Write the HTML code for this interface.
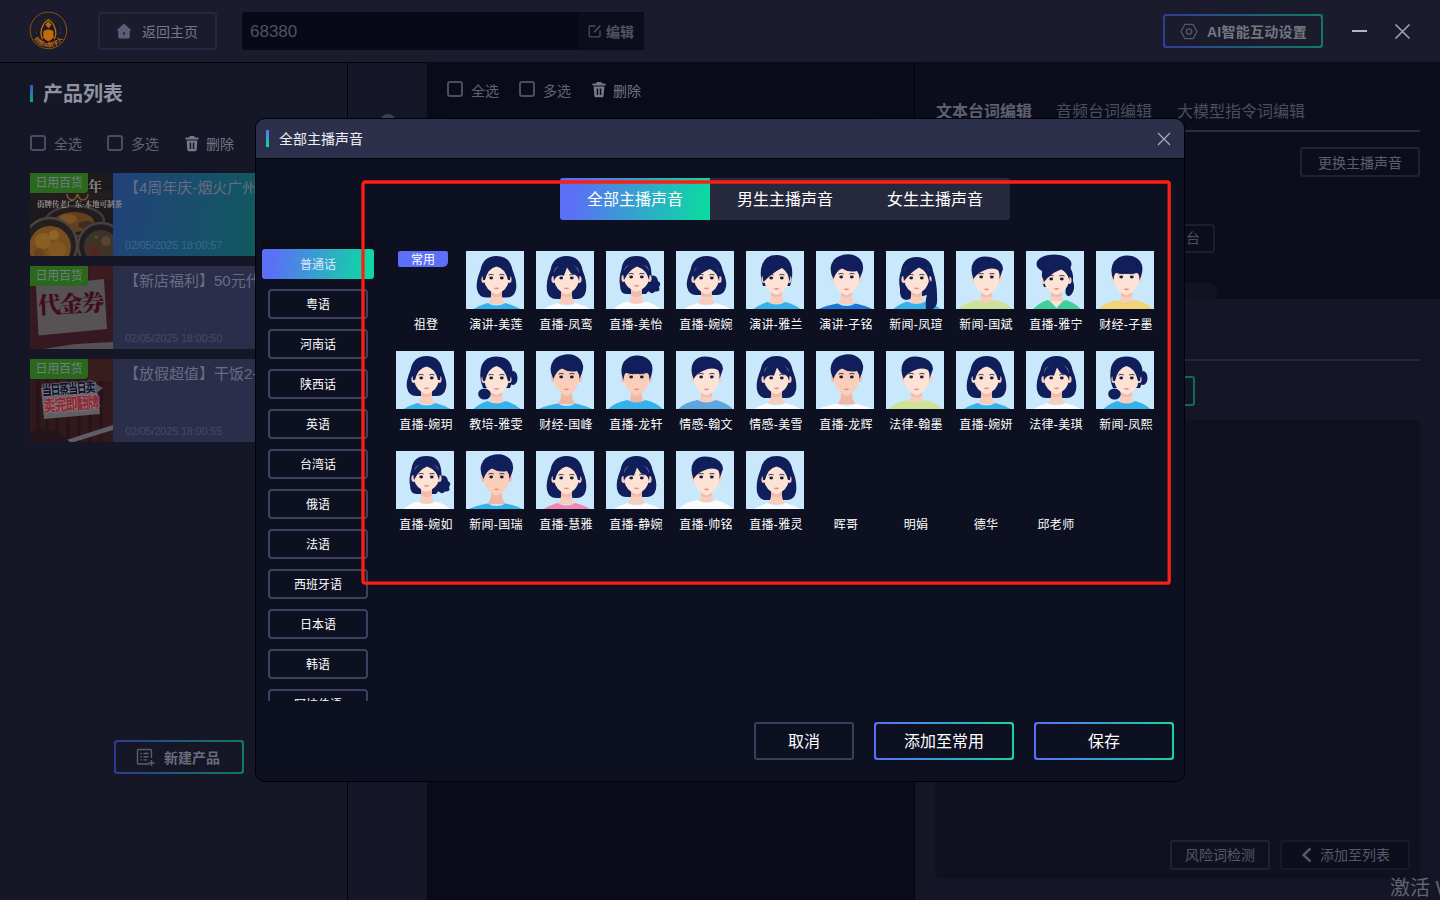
<!DOCTYPE html>
<html lang="zh-CN">
<head>
<meta charset="utf-8">
<title>全部主播声音</title>
<style>
*{box-sizing:border-box;margin:0;padding:0}
html,body{width:1440px;height:900px;overflow:hidden;background:#151626;font-family:"Liberation Sans","Noto Sans CJK SC",sans-serif;color:#fff}
.abs{position:absolute}
#app{position:relative;width:1440px;height:900px;overflow:hidden;background:#151626}
/* ---------- background app (dimmed) ---------- */
#topbar{left:0;top:0;width:1440px;height:62px;background:#1a1c2e}
#topline{left:0;top:62px;width:427px;height:1px;background:#030306}
#left{left:0;top:63px;width:347px;height:837px;background:#151626}
#leftline{left:347px;top:63px;width:1px;height:837px;background:#030306}
#mid{left:348px;top:63px;width:79px;height:837px;background:#151627}
#center{left:427px;top:62px;width:487px;height:838px;background:#0a0b18}
#rightline{left:914px;top:62px;width:1px;height:838px;background:#030306}
#right{left:915px;top:62px;width:525px;height:838px;background:#141526}
#righttop{left:915px;top:62px;width:525px;height:237px;background:#0c0d1b}
.dim{color:#6c6f82}
.btn-d{border:2px solid #2a2c44;border-radius:3px;color:#70738a;font-size:14px;text-align:center}
.cb{width:16px;height:16px;border:2px solid #4a4c62;border-radius:3px}
.txt14{font-size:14px;line-height:20px;color:#5f6275;white-space:nowrap}
/* product cards */
.card{left:30px;width:230px;height:83px;background:#2b2e4a;overflow:hidden}
.card .thumb{position:absolute;left:0;top:0;width:83px;height:83px}
.card .badge{position:absolute;left:0;top:0;width:58px;height:20px;background:#2a681b;color:#737d86;font-size:12px;line-height:20px;letter-spacing:-0.3px;text-align:center;border-bottom-right-radius:4px;white-space:nowrap;overflow:hidden}
.card .title{position:absolute;left:94px;top:5px;font-size:15px;line-height:20px;color:#686c82;white-space:nowrap}
.card .time{position:absolute;left:95px;top:65px;font-size:11px;line-height:14px;color:#454a66;white-space:nowrap;letter-spacing:-0.2px}
/* ---------- modal ---------- */
#modal{left:255px;top:118px;width:930px;height:664px;border:1px solid #010103;border-radius:10px;background:#0d1021;overflow:hidden}
#mhead{left:0;top:0;width:928px;height:39px;background:#2c304b}
#mheadline{left:0;top:39px;width:928px;height:1px;background:#05050a}
.grad{background:linear-gradient(100deg,#5b6ff7 0%,#5b6ff7 10%,#0dd8a3 94%,#0dd8a3 100%)}
.lang{left:12px;width:100px;height:30px;border:2px solid #3d4060;border-radius:4px;font-size:12px;line-height:28px;text-align:center;color:#fff;white-space:nowrap}
.tab{top:0;width:150px;height:42px;font-size:16px;line-height:44px;text-align:center;color:#fff;white-space:nowrap}
.av{width:58px;height:58px;background:#c9e8fb;overflow:hidden}
.av svg{display:block}
.nm{width:70px;height:16px;font-size:12px;line-height:16px;text-align:center;color:#fff;white-space:nowrap;letter-spacing:0.3px}
.fbtn{top:603px;height:38px;border-radius:3px;font-size:16px;line-height:36px;text-align:center;color:#fff;white-space:nowrap}
</style>
</head>
<body>
<div id="app">
<!--BG-START-->
<div class="abs" id="topbar"></div>
<div class="abs" id="left"></div>
<div class="abs" id="mid"></div>
<div class="abs" id="center"></div>
<div class="abs" id="right"></div>
<div class="abs" id="righttop"></div>
<div class="abs" id="topline"></div>
<div class="abs" id="leftline"></div>
<div class="abs" id="rightline"></div>

<!-- logo -->
<svg class="abs" style="left:28px;top:10px" width="41" height="41" viewBox="0 0 41 41">
  <circle cx="20.400" cy="20.400" r="18.300" fill="none" stroke="#98540e" stroke-width="0.900"/>
  <path d="M11 13.500 A12 12 0 0 1 29.800 13.500" fill="none" stroke="#4d3318" stroke-width="0.800" stroke-dasharray="2 1.300"/>
  <path d="M8.500 24 A12.500 12.500 0 0 1 9.500 15.500 M31.300 15.500 A12.500 12.500 0 0 1 32.300 24" fill="none" stroke="#4d3318" stroke-width="0.800" stroke-dasharray="2 1.300"/>
  <path d="M14.600 29 Q12.800 26.500 13 23 Q13.400 14 20.400 9.800 Q27.400 14 27.800 23 Q28 26.500 26.200 29" fill="none" stroke="#c56a06" stroke-width="1.300"/>
  <path d="M20.400 11.800 L23 14.800 L20.400 17.800 L17.800 14.800 Z" fill="#c56a06" stroke="#c56a06" stroke-width="0.800" stroke-linejoin="round"/>
  <path d="M15.300 21.300 Q20.400 17.800 25.500 21.300 L25.500 27.500 Q23.500 30.300 20.400 31.300 Q17.300 30.300 15.300 27.500Z" fill="#c56a06"/>
  <path id="logoarc" d="M3.800 20.400 A16.600 16.600 0 0 0 37 20.400" fill="none"/>
  <text font-size="5.800" font-weight="700" fill="#c56a06" text-anchor="middle" font-family="Liberation Sans, Noto Sans CJK SC, sans-serif" letter-spacing="0"><textPath href="#logoarc" startOffset="50%">创想AI数字人</textPath></text>
</svg>

<!-- back home -->
<div class="abs" style="left:98px;top:12px;width:119px;height:38px;border:2px solid #25273c;border-radius:3px"></div>
<svg class="abs" style="left:116px;top:23px" width="16" height="16" viewBox="0 0 16 16"><path d="M8 0.500 L0.300 7.600 L2.300 7.600 L2.300 14.200 Q2.300 15.500 3.600 15.500 L12.400 15.500 Q13.700 15.500 13.700 14.200 L13.700 7.600 L15.700 7.600 Z" fill="#5b5e78"/><rect x="7.300" y="9" width="1.400" height="3" fill="#1a1c2d"/></svg>
<div class="abs" style="left:142px;top:22px;font-size:14px;line-height:20px;color:#74778a;white-space:nowrap">返回主页</div>

<!-- name input -->
<div class="abs" style="left:242px;top:12px;width:402px;height:38px;background:#080916;border-radius:3px"></div>
<div class="abs" style="left:579px;top:12px;width:65px;height:38px;background:#0c0d1b;border-radius:0 3px 3px 0"></div>
<div class="abs" style="left:250px;top:21px;font-size:17px;line-height:22px;color:#4f5162;white-space:nowrap">68380</div>
<svg class="abs" style="left:588px;top:24px" width="14" height="14" viewBox="0 0 14 14"><path d="M7.500 2 H2.200 Q1.200 2 1.200 3 V11.800 Q1.200 12.800 2.200 12.800 H11 Q12 12.800 12 11.800 V6.500" fill="none" stroke="#4c4e5e" stroke-width="1.300"/><path d="M6 8.200 L12.300 1.600" stroke="#4c4e5e" stroke-width="1.600" fill="none"/></svg>
<div class="abs" style="left:606px;top:22px;font-size:14px;line-height:20px;font-weight:700;color:#50525f;white-space:nowrap">编辑</div>

<!-- AI settings -->
<div class="abs" style="left:1163px;top:14px;width:160px;height:34px;border-radius:3px;background:linear-gradient(90deg,#323c96,#117a63);padding:2px"><div style="width:100%;height:100%;background:#1a1c2d;border-radius:2px"></div></div>
<svg class="abs" style="left:1180px;top:23px" width="18" height="17" viewBox="0 0 18 17"><path d="M5 1.300 L13 1.300 L17 8.500 L13 15.700 L5 15.700 L1 8.500 Z" fill="none" stroke="#55586a" stroke-width="1.300" stroke-linejoin="round"/><circle cx="9" cy="8.500" r="2.700" fill="none" stroke="#55586a" stroke-width="1.300"/></svg>
<div class="abs" style="left:1207px;top:22px;font-size:14px;line-height:20px;font-weight:700;color:#75767f;white-space:nowrap;letter-spacing:0.25px">AI智能互动设置</div>
<div class="abs" style="left:1352px;top:30px;width:15px;height:2px;background:#b4b6c8"></div>
<svg class="abs" style="left:1394px;top:23px" width="17" height="17" viewBox="0 0 17 17"><path d="M1.500 1.500 L15.500 15.500 M15.500 1.500 L1.500 15.500" stroke="#a4a6b8" stroke-width="1.500" fill="none"/></svg>

<!-- left panel -->
<div class="abs" style="left:30px;top:85px;width:3px;height:17px;background:linear-gradient(180deg,#4150c8,#0fa587)"></div>
<div class="abs" style="left:43px;top:80px;font-size:20px;line-height:28px;font-weight:700;color:#9092a0;white-space:nowrap">产品列表</div>
<div class="abs cb" style="left:30px;top:135px"></div>
<div class="abs txt14" style="left:54px;top:134px">全选</div>
<div class="abs cb" style="left:107px;top:135px"></div>
<div class="abs txt14" style="left:131px;top:134px">多选</div>
<svg class="abs" style="left:184px;top:135px" width="16" height="17" viewBox="0 0 16 17"><path d="M5.500 1 h5 v1.600 h4 v2 h-13 v-2 h4 z" fill="#777a8c"/><path d="M2.600 5.600 h10.800 l-0.800 9.400 q-0.100 1.300 -1.400 1.300 h-6.400 q-1.300 0 -1.400 -1.300 z M5.700 7.500 v6.500 h1.500 v-6.500 z M8.800 7.500 v6.500 h1.500 v-6.500 z" fill="#777a8c" fill-rule="evenodd"/></svg>
<div class="abs txt14" style="left:206px;top:134px;color:#727588">删除</div>

<!-- product cards -->
<div class="abs card" style="top:173px;background:linear-gradient(100deg,#24407c 30%,#0f5a5e 100%)">
  <div class="thumb" style="background:#1d1a1f">
    <svg width="83" height="83" viewBox="0 0 83 83"><rect width="83" height="83" fill="#1e1a1e"/>
      <rect x="0" y="18" width="83" height="8" fill="#2a211f"/>
      <ellipse cx="45" cy="48" rx="29" ry="15" fill="#241f20" stroke="#4f433d" stroke-width="2.500"/>
      <ellipse cx="44" cy="49" rx="20" ry="10" fill="#7a4c20"/>
      <ellipse cx="38" cy="46" rx="9" ry="5" fill="#9a6426"/>
      <ellipse cx="56" cy="52" rx="8" ry="4" fill="#4a3426"/>
      <circle cx="71" cy="73" r="23" fill="#262224" stroke="#5a4c44" stroke-width="2.500"/>
      <circle cx="71" cy="74" r="17" fill="#4b3b2c"/>
      <circle cx="64" cy="78" r="5" fill="#6a2a1c"/><circle cx="76" cy="68" r="5" fill="#6b5434"/><circle cx="66" cy="64" r="2" fill="#3f6a2c"/>
      <circle cx="20" cy="72" r="27" fill="#2a2322" stroke="#5e5048" stroke-width="2.500"/>
      <circle cx="20" cy="74" r="21" fill="#94601f"/>
      <circle cx="13" cy="68" r="8" fill="#ad7426"/><circle cx="27" cy="77" r="9" fill="#a46b22"/><circle cx="24" cy="62" r="5" fill="#b27a2c"/><circle cx="9" cy="80" r="5" fill="#7f521e"/>
      <path d="M37 21 a5 6 0 1 0 10 0 M48 21 a5 6 0 1 0 10 0" fill="none" stroke="#9a6a1e" stroke-width="1.500"/>
    <rect width="83" height="83" fill="#12121e" opacity="0.22"/></svg>
    <div style="position:absolute;left:7px;top:27px;font-size:7.500px;line-height:10px;color:#98908a;white-space:nowrap;font-weight:700;font-family:'Liberation Serif','Noto Serif CJK SC',serif">街牌传老广东·本地可制茶</div>
    <div style="position:absolute;left:58px;top:5px;font-size:14px;line-height:18px;color:#8a827c;font-weight:700;font-family:'Liberation Serif','Noto Serif CJK SC',serif">年</div>
  </div>
  <div class="badge">日用百货</div>
  <div class="title">【4周年庆-烟火广州】</div>
  <div class="time" style="color:#356a8c">02/05/2025 18:00:57</div>
</div>
<div class="abs card" style="top:266px">
  <div class="thumb" style="background:#3f1a20">
    <svg width="83" height="83" viewBox="0 0 83 83"><rect width="83" height="83" fill="#3f1a20"/><rect x="60" y="0" width="23" height="14" fill="#4a1c20"/><path d="M6 20 L74 13 L77 63 L8.500 69.500 Z" fill="#6b6464"/><path d="M13 83 L45 78 L83 76 L83 83 Z" fill="#6a6062"/><rect width="83" height="83" fill="#12121e" opacity="0.22"/></svg>
    <div style="position:absolute;left:8px;top:22.5px;width:68px;font-size:23px;line-height:32px;color:#400d18;font-weight:900;white-space:nowrap;letter-spacing:-1.200px;transform:rotate(-3deg);font-family:'Liberation Serif','Noto Serif CJK SC',serif">代金券</div>
  </div>
  <div class="badge">日用百货</div>
  <div class="title">【新店福利】50元代金券</div>
  <div class="time">02/05/2025 18:00:50</div>
</div>
<div class="abs card" style="top:359px">
  <div class="thumb" style="background:#351818">
    <svg width="83" height="83" viewBox="0 0 83 83"><rect width="83" height="83" fill="#3a1a1b"/>
      <path d="M8 0 v83 M17 0 v83 M27 0 v83 M38 0 v83 M49 0 v83 M60 0 v83 M71 0 v83" stroke="#2a1417" stroke-width="3"/>
      <rect x="58" y="0" width="25" height="22" fill="#45201c"/>
      <path d="M11 29 L66 23 L70 55 L14 60 Z" fill="#77747c"/>
      <path d="M64 24 l9 5 l-8 6 z" fill="#6a6a74"/>
      <path d="M30 83 L83 66 L83 71 L44 83 Z" fill="#77727a"/>
      <path d="M0 74 Q20 62 40 83 L0 83Z" fill="#2a1416"/>
    <rect width="83" height="83" fill="#12121e" opacity="0.22"/></svg>
    <div style="position:absolute;left:11px;top:23px;font-size:10px;line-height:14px;color:#10132a;font-weight:900;white-space:nowrap;transform-origin:0 0;transform:rotate(-4deg) scale(1,1.350);letter-spacing:-1.200px;text-shadow:0 0 1px #a8a8b0,0 0 1px #a8a8b0">当日蒸当日卖</div>
    <div style="position:absolute;left:13px;top:38px;font-size:12px;line-height:14px;color:#8a2a32;font-weight:900;white-space:nowrap;transform-origin:0 0;transform:rotate(-4deg) scale(1,1.350);letter-spacing:-1px;text-shadow:0 0 1px #a8a0a4,0 0 1px #a8a0a4">卖完即翻牌</div>
  </div>
  <div class="badge">日用百货</div>
  <div class="title">【放假超值】干饭2-3人餐</div>
  <div class="time">02/05/2025 18:00:55</div>
</div>

<!-- new product -->
<div class="abs" style="left:114px;top:740px;width:130px;height:34px;border-radius:3px;background:linear-gradient(90deg,#2f3a92,#117a63);padding:2px"><div style="width:100%;height:100%;background:#151626;border-radius:2px"></div></div>
<svg class="abs" style="left:136px;top:748px" width="20" height="19" viewBox="0 0 20 19"><path d="M13 16 H2.500 Q1.500 16 1.500 15 V2.500 Q1.500 1.500 2.500 1.500 H14.500 Q15.500 1.500 15.500 2.500 V10" fill="none" stroke="#5c5e6e" stroke-width="1.400"/><path d="M4.500 5.500 h1.500 M7.500 5.500 h5 M4.500 8.700 h1.500 M7.500 8.700 h5 M4.500 11.900 h1.500 M7.500 11.900 h3.500" stroke="#5c5e6e" stroke-width="1.400"/><path d="M15.500 12 v6 M12.500 15 h6" stroke="#5c5e6e" stroke-width="1.500"/></svg>
<div class="abs" style="left:164px;top:748px;font-size:14px;line-height:20px;font-weight:700;color:#6a6c7c;white-space:nowrap">新建产品</div>

<!-- center toolbar -->
<div class="abs" style="left:446px;top:113px;width:434px;height:300px;background:#0c0d1b;border-radius:6px 6px 0 0"></div>
<div class="abs" style="left:380px;top:114px;width:16px;height:16px;border-radius:8px;background:#3c3e4e"></div>
<div class="abs cb" style="left:447px;top:81px"></div>
<div class="abs txt14" style="left:471px;top:81px">全选</div>
<div class="abs cb" style="left:519px;top:81px"></div>
<div class="abs txt14" style="left:543px;top:81px">多选</div>
<svg class="abs" style="left:591px;top:81px" width="16" height="17" viewBox="0 0 16 17"><path d="M5.500 1 h5 v1.600 h4 v2 h-13 v-2 h4 z" fill="#777a8c"/><path d="M2.600 5.600 h10.800 l-0.800 9.400 q-0.100 1.300 -1.400 1.300 h-6.400 q-1.300 0 -1.400 -1.300 z M5.700 7.500 v6.500 h1.500 v-6.500 z M8.800 7.500 v6.500 h1.500 v-6.500 z" fill="#777a8c" fill-rule="evenodd"/></svg>
<div class="abs txt14" style="left:613px;top:81px;color:#727588">删除</div>

<!-- right panel -->
<div class="abs" style="left:936px;top:101px;font-size:16px;line-height:22px;font-weight:700;color:#5e6070;white-space:nowrap">文本台词编辑</div>
<div class="abs" style="left:1056px;top:101px;font-size:16px;line-height:22px;color:#4b4d5d;white-space:nowrap">音频台词编辑</div>
<div class="abs" style="left:1177px;top:101px;font-size:16px;line-height:22px;color:#4b4d5d;white-space:nowrap">大模型指令词编辑</div>
<div class="abs" style="left:934px;top:130px;width:486px;height:2px;background:#2a2c42"></div>
<div class="abs" style="left:1300px;top:147px;width:120px;height:30px;border:2px solid #1f2135;border-radius:3px;font-size:14px;line-height:28px;text-align:center;color:#5c5e70;white-space:nowrap">更换主播声音</div>
<div class="abs" style="left:1100px;top:224px;width:115px;height:29px;border:2px solid #1c1e30;border-radius:3px"></div><div class="abs" style="left:1186px;top:228px;font-size:14px;line-height:20px;color:#4b4d5d;white-space:nowrap">台</div>
<div class="abs" style="left:915px;top:283px;width:302px;height:16px;background:#111222;border-radius:0 8px 0 0"></div>
<div class="abs" style="left:934px;top:359px;width:486px;height:2px;background:#23253b"></div>
<div class="abs" style="left:1100px;top:376px;width:95px;height:30px;border:2px solid #0f6a5c;border-radius:3px"></div>
<div class="abs" style="left:935px;top:420px;width:485px;height:459px;background:#10111f;border-radius:6px"></div>
<div class="abs" style="left:1170px;top:840px;width:100px;height:30px;border:2px solid #1f2135;border-radius:3px;font-size:14px;line-height:26px;text-align:center;color:#55576a;white-space:nowrap">风险词检测</div>
<div class="abs" style="left:1280px;top:840px;width:130px;height:30px;border:2px solid #171828;background:#0d0e1b;border-radius:3px"></div>
<svg class="abs" style="left:1301px;top:847px" width="12" height="16" viewBox="0 0 12 16"><path d="M9.500 1.500 L2.500 8 L9.500 14.500" fill="none" stroke="#55576a" stroke-width="2.400"/></svg>
<div class="abs" style="left:1320px;top:845px;font-size:14px;line-height:20px;color:#55576a;white-space:nowrap">添加至列表</div>
<div class="abs" style="left:1390px;top:874px;font-size:20px;line-height:28px;color:#62646f;white-space:nowrap">激活 Windows</div>
<!--BG-END-->
<!--MODAL-START-->
<div class="abs" id="modal">
<div class="abs" id="mhead"></div><div class="abs" id="mheadline"></div>
<div class="abs" style="left:10px;top:11px;width:3px;height:17px;background:linear-gradient(180deg,#5b6ff7,#12d6a3)"></div>
<div class="abs" style="left:23px;top:10px;font-size:14px;line-height:20px;color:#ecedf5;white-space:nowrap">全部主播声音</div>
<svg class="abs" style="left:901px;top:13px" width="14" height="14" viewBox="0 0 14 14"><path d="M1 1 L13 13 M13 1 L1 13" stroke="#a9acc6" stroke-width="1.200" fill="none"/></svg>
<div class="abs" style="left:0;top:119px;width:130px;height:463px;overflow:hidden"><div class="abs" style="left:6px;top:1px;width:112px;height:12px;background:#0b0d1b"></div>
<div class="abs grad" style="left:6px;top:11px;width:112px;height:30px;border-radius:3px;font-size:12px;line-height:32px;text-align:center;color:#dfe6ff;white-space:nowrap">普通话</div>
<div class="abs lang" style="top:51px">粤语</div>
<div class="abs lang" style="top:91px">河南话</div>
<div class="abs lang" style="top:131px">陕西话</div>
<div class="abs lang" style="top:171px">英语</div>
<div class="abs lang" style="top:211px">台湾话</div>
<div class="abs lang" style="top:251px">俄语</div>
<div class="abs lang" style="top:291px">法语</div>
<div class="abs lang" style="top:331px">西班牙语</div>
<div class="abs lang" style="top:371px">日本语</div>
<div class="abs lang" style="top:411px">韩语</div>
<div class="abs lang" style="top:451px">阿拉伯语</div>
</div>
<div class="abs" style="left:304px;top:59px;width:450px;height:42px;background:#26283e;border-radius:3px;overflow:hidden">
<div class="abs tab grad" style="left:0">全部主播声音</div><div class="abs tab" style="left:150px">男生主播声音</div><div class="abs tab" style="left:300px">女生主播声音</div></div>
<div class="abs nm" style="left:135px;top:197.5px">祖登</div>
<div class="abs av" style="left:210px;top:132px"><svg width="58" height="58" viewBox="0 0 58 58"><rect width="58" height="58" fill="#c9e8fb"/><path d="M30.500 5 Q44 5 46.500 19 Q51.500 31 50 38.5 Q48 47.0 40 46.5 L21 46.5 Q13 47.0 11 38.5 Q9.500 31 14.500 19 Q17 5 30.500 5Z" fill="#101f5c"/><path d="M25.0 36 h11 v9 q0.500 5 4 8 h-19 q3.500 -3 4 -8z" fill="#f7cdbd"/><path d="M25.0 40 h11 v4.500 q-5.500 3 -11 0z" fill="#f2bcaa"/><path d="M7 58.500 Q13 54.5 21.5 52 Q30.5 57 39.5 52 Q49 54.5 55 58.500 Z" fill="#35b2ec"/><ellipse cx="17.599999999999998" cy="28.5" rx="2.200" ry="3.400" fill="#f7cdbd"/><ellipse cx="43.4" cy="28.5" rx="2.200" ry="3.400" fill="#f7cdbd"/><path d="M18.2 22 Q18.2 14 30.5 14 Q42.8 14 42.8 22 L42.8 30 Q41.3 39.5 30.5 43.5 Q19.7 39.5 18.2 30 Z" fill="#fde2d6"/><ellipse cx="25.2" cy="27" rx="1.900" ry="1.400" fill="#1a1a3a"/><ellipse cx="35.8" cy="27" rx="1.900" ry="1.400" fill="#1a1a3a"/><path d="M22.5 24 q2.700 -1.300 5.200 0 M33.3 24 q2.500 -1.300 5.200 0" stroke="#2a2a4a" stroke-width="0.900" fill="none"/><path d="M27.5 37.0 q3 2.600 6 0 q-3 -0.800 -6 0z" fill="#f2867e"/><path d="M30.500 15.500 Q22 17 19 29 L17 29 Q15 18 20 10 Q30.500 5 41 10 Q46 18 44 29 L42 29 Q39 17 30.500 15.500Z" fill="#101f5c"/></svg></div>
<div class="abs nm" style="left:205px;top:197.5px">演讲-美莲</div>
<div class="abs av" style="left:280px;top:132px"><svg width="58" height="58" viewBox="0 0 58 58"><rect width="58" height="58" fill="#c9e8fb"/><path d="M30.500 5 Q44 5 46.500 19 Q51.500 31 50 40 Q48 48.5 40 48 L21 48 Q13 48.5 11 40 Q9.500 31 14.500 19 Q17 5 30.500 5Z" fill="#101f5c"/><path d="M25.0 36 h11 v9 q0.500 5 4 8 h-19 q3.500 -3 4 -8z" fill="#f7cdbd"/><path d="M25.0 40 h11 v4.500 q-5.500 3 -11 0z" fill="#f2bcaa"/><path d="M7 58.500 Q13 54.5 21.5 52 Q30.5 57 39.5 52 Q49 54.5 55 58.500 Z" fill="#fbfbfd"/><ellipse cx="17.599999999999998" cy="28.5" rx="2.200" ry="3.400" fill="#f7cdbd"/><ellipse cx="43.4" cy="28.5" rx="2.200" ry="3.400" fill="#f7cdbd"/><path d="M18.2 22 Q18.2 14 30.5 14 Q42.8 14 42.8 22 L42.8 30 Q41.3 39.5 30.5 43.5 Q19.7 39.5 18.2 30 Z" fill="#fde2d6"/><ellipse cx="25.2" cy="27" rx="1.900" ry="1.400" fill="#1a1a3a"/><ellipse cx="35.8" cy="27" rx="1.900" ry="1.400" fill="#1a1a3a"/><path d="M22.5 24 q2.700 -1.300 5.200 0 M33.3 24 q2.500 -1.300 5.200 0" stroke="#2a2a4a" stroke-width="0.900" fill="none"/><path d="M27.5 37.0 q3 2.600 6 0 q-3 -0.800 -6 0z" fill="#f2867e"/><path d="M18 30 Q15 15 30.500 12 Q46 15 43 30 Q42 23 35 22.500 L31 16.500 L28 24.500 Q20 23 18 30Z" fill="#101f5c"/></svg></div>
<div class="abs nm" style="left:275px;top:197.5px">直播-凤鸾</div>
<div class="abs av" style="left:350px;top:132px"><svg width="58" height="58" viewBox="0 0 58 58"><rect width="58" height="58" fill="#c9e8fb"/><path d="M43.0 25 Q51.0 23 52.0 30 Q56.0 32 53.0 36 Q55.0 41 49.0 40.500 Q46.0 44 42.0 40 Z" fill="#101f5c"/><path d="M30.500 5 Q43 5 45 18 Q46.500 28 44 38 L40 43 L22 43 Q14 44 14 34 Q12.500 28 15.500 18 Q17 5 30.500 5Z" fill="#101f5c"/><path d="M25.0 36 h11 v9 q0.500 5 4 8 h-19 q3.500 -3 4 -8z" fill="#f7cdbd"/><path d="M25.0 40 h11 v4.500 q-5.500 3 -11 0z" fill="#f2bcaa"/><path d="M7 58.500 Q13 53.0 21.5 50.5 Q30.5 55.5 39.5 50.5 Q49 53.0 55 58.500 Z" fill="#fbfbfd"/><ellipse cx="17.599999999999998" cy="27.5" rx="2.200" ry="3.400" fill="#f7cdbd"/><ellipse cx="43.4" cy="27.5" rx="2.200" ry="3.400" fill="#f7cdbd"/><path d="M18.2 21 Q18.2 13 30.5 13 Q42.8 13 42.8 21 L42.8 29 Q41.3 37 30.5 41 Q19.7 37 18.2 29 Z" fill="#fde2d6"/><ellipse cx="25.2" cy="26" rx="1.900" ry="1.400" fill="#1a1a3a"/><ellipse cx="35.8" cy="26" rx="1.900" ry="1.400" fill="#1a1a3a"/><path d="M22.5 23 q2.700 -1.300 5.200 0 M33.3 23 q2.500 -1.300 5.200 0" stroke="#2a2a4a" stroke-width="0.900" fill="none"/><path d="M27.5 34.5 q3 2.600 6 0 q-3 -0.800 -6 0z" fill="#f2867e"/><path d="M18 29 Q14.500 14 30.500 11.500 Q46.500 14 43 29 Q41 19 31 15.500 Q23 19 18 29Z" fill="#101f5c"/></svg></div>
<div class="abs nm" style="left:345px;top:197.5px">直播-美怡</div>
<div class="abs av" style="left:420px;top:132px"><svg width="58" height="58" viewBox="0 0 58 58"><rect width="58" height="58" fill="#c9e8fb"/><path d="M30.500 5 Q44 5 46.500 19 Q51.500 31 50 36 Q48 44.5 40 44 L21 44 Q13 44.5 11 36 Q9.500 31 14.500 19 Q17 5 30.500 5Z" fill="#101f5c"/><path d="M25.0 36 h11 v9 q0.500 5 4 8 h-19 q3.500 -3 4 -8z" fill="#f7cdbd"/><path d="M25.0 40 h11 v4.500 q-5.500 3 -11 0z" fill="#f2bcaa"/><path d="M7 58.500 Q13 54.5 21.5 52 Q30.5 57 39.5 52 Q49 54.5 55 58.500 Z" fill="#fbfbfd"/><ellipse cx="17.599999999999998" cy="28.5" rx="2.200" ry="3.400" fill="#f7cdbd"/><ellipse cx="43.4" cy="28.5" rx="2.200" ry="3.400" fill="#f7cdbd"/><path d="M18.2 22 Q18.2 14 30.5 14 Q42.8 14 42.8 22 L42.8 30 Q41.3 39.5 30.5 43.5 Q19.7 39.5 18.2 30 Z" fill="#fde2d6"/><ellipse cx="25.2" cy="27" rx="1.900" ry="1.400" fill="#1a1a3a"/><ellipse cx="35.8" cy="27" rx="1.900" ry="1.400" fill="#1a1a3a"/><path d="M22.5 24 q2.700 -1.300 5.200 0 M33.3 24 q2.500 -1.300 5.200 0" stroke="#2a2a4a" stroke-width="0.900" fill="none"/><path d="M27.5 37.0 q3 2.600 6 0 q-3 -0.800 -6 0z" fill="#f2867e"/><path d="M18 30 Q15 14 31 11.500 Q46 14 43 30 Q41 21 34 18 Q25 21 18 30Z" fill="#101f5c"/></svg></div>
<div class="abs nm" style="left:415px;top:197.5px">直播-婉婉</div>
<div class="abs av" style="left:490px;top:132px"><svg width="58" height="58" viewBox="0 0 58 58"><rect width="58" height="58" fill="#c9e8fb"/><path d="M30.500 4 Q44 4 46 18 Q47 28 44 35 L17 35 Q14 28 15 18 Q17 4 30.500 4Z" fill="#101f5c"/><path d="M25.0 36 h11 v9 q0.500 5 4 8 h-19 q3.500 -3 4 -8z" fill="#f7cdbd"/><path d="M25.0 40 h11 v4.500 q-5.500 3 -11 0z" fill="#f2bcaa"/><path d="M7 58.500 Q13 53.5 21.5 51 Q30.5 56 39.5 51 Q49 53.5 55 58.500 Z" fill="#35b2ec"/><ellipse cx="17.599999999999998" cy="28.5" rx="2.200" ry="3.400" fill="#f7cdbd"/><ellipse cx="43.4" cy="28.5" rx="2.200" ry="3.400" fill="#f7cdbd"/><path d="M18.2 22 Q18.2 14 30.5 14 Q42.8 14 42.8 22 L42.8 30 Q41.3 40 30.5 44 Q19.7 40 18.2 30 Z" fill="#fde2d6"/><ellipse cx="25.2" cy="27" rx="1.900" ry="1.400" fill="#1a1a3a"/><ellipse cx="35.8" cy="27" rx="1.900" ry="1.400" fill="#1a1a3a"/><path d="M22.5 24 q2.700 -1.300 5.200 0 M33.3 24 q2.500 -1.300 5.200 0" stroke="#2a2a4a" stroke-width="0.900" fill="none"/><path d="M27.5 37.5 q3 2.600 6 0 q-3 -0.800 -6 0z" fill="#f2867e"/><path d="M17.500 31 Q13.500 14 30.500 11 Q47.500 14 43.500 31 Q42.500 21 36 17 Q26 22 17.500 31Z" fill="#101f5c"/></svg></div>
<div class="abs nm" style="left:485px;top:197.5px">演讲-雅兰</div>
<div class="abs av" style="left:560px;top:132px"><svg width="58" height="58" viewBox="0 0 58 58"><rect width="58" height="58" fill="#c9e8fb"/><path d="M25.0 36 h11 v9 q0.500 5 4 8 h-19 q3.500 -3 4 -8z" fill="#f7cdbd"/><path d="M25.0 40 h11 v4.500 q-5.500 3 -11 0z" fill="#f2bcaa"/><path d="M2 58.500 Q8 55.0 21.5 52.5 Q30.5 57.5 39.5 52.5 Q51 55.0 57 58.500 Z" fill="#1f74d8"/><ellipse cx="17.4" cy="27.5" rx="2.200" ry="3.400" fill="#f7cdbd"/><ellipse cx="43.6" cy="27.5" rx="2.200" ry="3.400" fill="#f7cdbd"/><path d="M18.0 21 Q18.0 13 30.5 13 Q43.0 13 43.0 21 L43.0 29 Q41.5 40.5 30.5 44.5 Q19.5 40.5 18.0 29 Z" fill="#fde2d6"/><ellipse cx="25.2" cy="26" rx="1.900" ry="1.400" fill="#1a1a3a"/><ellipse cx="35.8" cy="26" rx="1.900" ry="1.400" fill="#1a1a3a"/><path d="M22.5 23 q2.700 -1.300 5.200 0 M33.3 23 q2.500 -1.300 5.200 0" stroke="#2a2a4a" stroke-width="0.900" fill="none"/><path d="M27.5 38.0 q3 2.600 6 0 q-3 -0.800 -6 0z" fill="#f2867e"/><path d="M17.500 28 Q13 20 15.500 13 Q18 5 29 3.500 Q38 2 44 8 Q49 14 46 22 L43.500 28 Q43.500 23 41 20 Q33 22 26 17.500 Q20 20 17.500 28Z" fill="#101f5c"/></svg></div>
<div class="abs nm" style="left:555px;top:197.5px">演讲-子铭</div>
<div class="abs av" style="left:630px;top:132px"><svg width="58" height="58" viewBox="0 0 58 58"><rect width="58" height="58" fill="#c9e8fb"/><path d="M30.500 6 Q45 6 47 20 Q51 32 51.0 44 Q52.0 55 46.0 58 L40.0 58 Q39.0 50 41.0 44 L20.0 49 Q13.0 48 14.0 38 Q12.0 28 15.0 20 Q17.0 6 30.500 6Z" fill="#101f5c"/><path d="M25.0 36 h11 v9 q0.500 5 4 8 h-19 q3.500 -3 4 -8z" fill="#f7cdbd"/><path d="M25.0 40 h11 v4.500 q-5.500 3 -11 0z" fill="#f2bcaa"/><path d="M7 58.500 Q13 53.0 21.5 50.5 Q30.5 55.5 39.5 50.5 Q49 53.0 55 58.500 Z" fill="#35b2ec"/><ellipse cx="17.599999999999998" cy="28.5" rx="2.200" ry="3.400" fill="#f7cdbd"/><ellipse cx="43.4" cy="28.5" rx="2.200" ry="3.400" fill="#f7cdbd"/><path d="M18.2 22 Q18.2 14 30.5 14 Q42.8 14 42.8 22 L42.8 30 Q41.3 39.5 30.5 43.5 Q19.7 39.5 18.2 30 Z" fill="#fde2d6"/><ellipse cx="25.2" cy="27" rx="1.900" ry="1.400" fill="#1a1a3a"/><ellipse cx="35.8" cy="27" rx="1.900" ry="1.400" fill="#1a1a3a"/><path d="M22.5 24 q2.700 -1.300 5.200 0 M33.3 24 q2.500 -1.300 5.200 0" stroke="#2a2a4a" stroke-width="0.900" fill="none"/><path d="M27.5 37.0 q3 2.600 6 0 q-3 -0.800 -6 0z" fill="#f2867e"/><path d="M18 30 Q14.500 14 30.500 11.500 Q46.500 14 43 30 Q41 20 33 16.500 Q25 21 18 30Z" fill="#101f5c"/><path d="M43.0 28 Q50.0 36 51.0 46 Q52.0 55 47.0 58 L40.0 58 Q39.0 50 42.0 44 Z" fill="#101f5c"/></svg></div>
<div class="abs nm" style="left:625px;top:197.5px">新闻-凤瑄</div>
<div class="abs av" style="left:700px;top:132px"><svg width="58" height="58" viewBox="0 0 58 58"><rect width="58" height="58" fill="#c9e8fb"/><path d="M25.0 36 h11 v9 q0.500 5 4 8 h-19 q3.500 -3 4 -8z" fill="#f7cdbd"/><path d="M25.0 40 h11 v4.500 q-5.500 3 -11 0z" fill="#f2bcaa"/><path d="M2 58.500 Q8 51.5 21.5 49 Q30.5 54 39.5 49 Q51 51.5 57 58.500 Z" fill="#cfe29a"/><ellipse cx="17.4" cy="27.5" rx="2.200" ry="3.400" fill="#f7cdbd"/><ellipse cx="43.6" cy="27.5" rx="2.200" ry="3.400" fill="#f7cdbd"/><path d="M18.0 21 Q18.0 13 30.5 13 Q43.0 13 43.0 21 L43.0 29 Q41.5 40.5 30.5 44.5 Q19.5 40.5 18.0 29 Z" fill="#fde2d6"/><ellipse cx="25.2" cy="26" rx="1.900" ry="1.400" fill="#1a1a3a"/><ellipse cx="35.8" cy="26" rx="1.900" ry="1.400" fill="#1a1a3a"/><path d="M22.5 23 q2.700 -1.300 5.200 0 M33.3 23 q2.500 -1.300 5.200 0" stroke="#2a2a4a" stroke-width="0.900" fill="none"/><path d="M27.5 38.0 q3 2.600 6 0 q-3 -0.800 -6 0z" fill="#f2867e"/><path d="M17.500 28 Q13.500 18 17.500 11 Q23 4 34 6 Q46 8 47 18 L43.500 28 Q44 22 42 19 Q35 16 28 19.500 Q21 22 17.500 28Z" fill="#101f5c"/></svg></div>
<div class="abs nm" style="left:695px;top:197.5px">新闻-国斌</div>
<div class="abs av" style="left:770px;top:132px"><svg width="58" height="58" viewBox="0 0 58 58"><rect width="58" height="58" fill="#c9e8fb"/><path d="M42 14 Q48 20 47 30 Q50 38 45 44 Q41 47 39.500 42 L40 30 Z" fill="#101f5c"/><ellipse cx="28" cy="13" rx="17.500" ry="9.500" fill="#101f5c"/><path d="M30.500 8 Q44 8 45 20 Q45.500 30 43 36 L18 36 Q15.500 30 16 20 Q17 8 30.500 8Z" fill="#101f5c"/><path d="M25.0 36 h11 v9 q0.500 5 4 8 h-19 q3.500 -3 4 -8z" fill="#f7cdbd"/><path d="M25.0 40 h11 v4.500 q-5.500 3 -11 0z" fill="#f2bcaa"/><path d="M7 58.500 Q13 51.5 21.5 49 Q30.5 54 39.5 49 Q49 51.5 55 58.500 Z" fill="#3fd09c"/><path d="M24 50 L30.500 57 L37 50 Z" fill="#fde2d6"/><ellipse cx="17.599999999999998" cy="29.5" rx="2.200" ry="3.400" fill="#f7cdbd"/><ellipse cx="43.4" cy="29.5" rx="2.200" ry="3.400" fill="#f7cdbd"/><path d="M18.2 23 Q18.2 15 30.5 15 Q42.8 15 42.8 23 L42.8 31 Q41.3 40 30.5 44 Q19.7 40 18.2 31 Z" fill="#fde2d6"/><ellipse cx="25.2" cy="28" rx="1.900" ry="1.400" fill="#1a1a3a"/><ellipse cx="35.8" cy="28" rx="1.900" ry="1.400" fill="#1a1a3a"/><path d="M22.5 25 q2.700 -1.300 5.200 0 M33.3 25 q2.500 -1.300 5.200 0" stroke="#2a2a4a" stroke-width="0.900" fill="none"/><path d="M27.5 37.5 q3 2.600 6 0 q-3 -0.800 -6 0z" fill="#f2867e"/><path d="M18 31 Q13 17 22 12 Q36 8 43.500 18 L43.500 29 Q41 21 35 18.500 Q25 22 18 31Z" fill="#101f5c"/></svg></div>
<div class="abs nm" style="left:765px;top:197.5px">直播-雅宁</div>
<div class="abs av" style="left:840px;top:132px"><svg width="58" height="58" viewBox="0 0 58 58"><rect width="58" height="58" fill="#c9e8fb"/><path d="M25.0 36 h11 v9 q0.500 5 4 8 h-19 q3.500 -3 4 -8z" fill="#f7cdbd"/><path d="M25.0 40 h11 v4.500 q-5.500 3 -11 0z" fill="#f2bcaa"/><path d="M2 58.500 Q8 51.5 21.5 49 Q30.5 54 39.5 49 Q51 51.5 57 58.500 Z" fill="#f2d478"/><ellipse cx="17.4" cy="27.5" rx="2.200" ry="3.400" fill="#f7cdbd"/><ellipse cx="43.6" cy="27.5" rx="2.200" ry="3.400" fill="#f7cdbd"/><path d="M18.0 21 Q18.0 13 30.5 13 Q43.0 13 43.0 21 L43.0 29 Q41.5 40.5 30.5 44.5 Q19.5 40.5 18.0 29 Z" fill="#fde2d6"/><ellipse cx="25.2" cy="26" rx="1.900" ry="1.400" fill="#1a1a3a"/><ellipse cx="35.8" cy="26" rx="1.900" ry="1.400" fill="#1a1a3a"/><path d="M22.5 23 q2.700 -1.300 5.200 0 M33.3 23 q2.500 -1.300 5.200 0" stroke="#2a2a4a" stroke-width="0.900" fill="none"/><path d="M27.5 38.0 q3 2.600 6 0 q-3 -0.800 -6 0z" fill="#f2867e"/><path d="M17.500 29 Q13 18 18 10.500 Q24 3.500 32 4.500 Q43 5 46 14 Q47.500 21 43.500 29 Q43.500 23 41 22 Q30.500 24 20 22 Q18 23 17.500 29Z" fill="#101f5c"/></svg></div>
<div class="abs nm" style="left:835px;top:197.5px">财经-子墨</div>
<div class="abs av" style="left:140px;top:232px"><svg width="58" height="58" viewBox="0 0 58 58"><rect width="58" height="58" fill="#c9e8fb"/><path d="M30.500 5 Q44 5 46.500 19 Q51.500 31 50 37 Q48 45.5 40 45 L21 45 Q13 45.5 11 37 Q9.500 31 14.500 19 Q17 5 30.500 5Z" fill="#101f5c"/><path d="M25.0 36 h11 v9 q0.500 5 4 8 h-19 q3.500 -3 4 -8z" fill="#f7cdbd"/><path d="M25.0 40 h11 v4.500 q-5.500 3 -11 0z" fill="#f2bcaa"/><path d="M7 58.500 Q13 54.5 21.5 52 Q30.5 57 39.5 52 Q49 54.5 55 58.500 Z" fill="#35b2ec"/><ellipse cx="17.599999999999998" cy="28.5" rx="2.200" ry="3.400" fill="#f7cdbd"/><ellipse cx="43.4" cy="28.5" rx="2.200" ry="3.400" fill="#f7cdbd"/><path d="M18.2 22 Q18.2 14 30.5 14 Q42.8 14 42.8 22 L42.8 30 Q41.3 39.5 30.5 43.5 Q19.7 39.5 18.2 30 Z" fill="#fde2d6"/><ellipse cx="25.2" cy="27" rx="1.900" ry="1.400" fill="#1a1a3a"/><ellipse cx="35.8" cy="27" rx="1.900" ry="1.400" fill="#1a1a3a"/><path d="M22.5 24 q2.700 -1.300 5.200 0 M33.3 24 q2.500 -1.300 5.200 0" stroke="#2a2a4a" stroke-width="0.900" fill="none"/><path d="M27.5 37.0 q3 2.600 6 0 q-3 -0.800 -6 0z" fill="#f2867e"/><path d="M30.500 15.500 Q22 17 19 29 L17 29 Q15 18 20 10 Q30.500 5 41 10 Q46 18 44 29 L42 29 Q39 17 30.500 15.500Z" fill="#101f5c"/></svg></div>
<div class="abs nm" style="left:135px;top:297.5px">直播-婉玥</div>
<div class="abs av" style="left:210px;top:232px"><svg width="58" height="58" viewBox="0 0 58 58"><rect width="58" height="58" fill="#c9e8fb"/><ellipse cx="18.5" cy="43" rx="6.300" ry="5.600" fill="#101f5c"/><ellipse cx="47.0" cy="27" rx="4.500" ry="7" fill="#101f5c"/><path d="M30.500 5.500 Q45 5.500 46.500 20 Q47.500 30 44 37 L17 37 Q13.500 30 14.500 20 Q16 5.500 30.500 5.500Z" fill="#101f5c"/><path d="M25.0 36 h11 v9 q0.500 5 4 8 h-19 q3.500 -3 4 -8z" fill="#f7cdbd"/><path d="M25.0 40 h11 v4.500 q-5.500 3 -11 0z" fill="#f2bcaa"/><path d="M7 58.500 Q13 52.5 21.5 50 Q30.5 55 39.5 50 Q49 52.5 55 58.500 Z" fill="#35b2ec"/><ellipse cx="17.599999999999998" cy="28.5" rx="2.200" ry="3.400" fill="#f7cdbd"/><ellipse cx="43.4" cy="28.5" rx="2.200" ry="3.400" fill="#f7cdbd"/><path d="M18.2 22 Q18.2 14 30.5 14 Q42.8 14 42.8 22 L42.8 30 Q41.3 40 30.5 44 Q19.7 40 18.2 30 Z" fill="#fde2d6"/><ellipse cx="25.2" cy="27" rx="1.900" ry="1.400" fill="#1a1a3a"/><ellipse cx="35.8" cy="27" rx="1.900" ry="1.400" fill="#1a1a3a"/><path d="M22.5 24 q2.700 -1.300 5.200 0 M33.3 24 q2.500 -1.300 5.200 0" stroke="#2a2a4a" stroke-width="0.900" fill="none"/><path d="M27.5 37.5 q3 2.600 6 0 q-3 -0.800 -6 0z" fill="#f2867e"/><path d="M30.500 15 Q22 17 19 30 L17 30 Q14 18 20 10 Q30.500 5 41 10 Q47 18 44 30 L42 30 Q39 17 30.500 15Z" fill="#101f5c"/></svg></div>
<div class="abs nm" style="left:205px;top:297.5px">教培-雅雯</div>
<div class="abs av" style="left:280px;top:232px"><svg width="58" height="58" viewBox="0 0 58 58"><rect width="58" height="58" fill="#c9e8fb"/><path d="M25.0 36 h11 v9 q0.500 5 4 8 h-19 q3.500 -3 4 -8z" fill="#f0b8a2"/><path d="M25.0 40 h11 v4.500 q-5.500 3 -11 0z" fill="#f2bcaa"/><path d="M2 58.500 Q8 55.0 21.5 52.5 Q30.5 57.5 39.5 52.5 Q51 55.0 57 58.500 Z" fill="#35b2ec"/><ellipse cx="17.4" cy="27.5" rx="2.200" ry="3.400" fill="#f0b8a2"/><ellipse cx="43.6" cy="27.5" rx="2.200" ry="3.400" fill="#f0b8a2"/><path d="M18.0 21 Q18.0 13 30.5 13 Q43.0 13 43.0 21 L43.0 29 Q41.5 40.5 30.5 44.5 Q19.5 40.5 18.0 29 Z" fill="#f9cfbb"/><ellipse cx="25.2" cy="26" rx="1.900" ry="1.400" fill="#1a1a3a"/><ellipse cx="35.8" cy="26" rx="1.900" ry="1.400" fill="#1a1a3a"/><path d="M22.5 23 q2.700 -1.300 5.200 0 M33.3 23 q2.500 -1.300 5.200 0" stroke="#2a2a4a" stroke-width="0.900" fill="none"/><path d="M27.5 38.0 q3 2.600 6 0 q-3 -0.800 -6 0z" fill="#f2867e"/><path d="M17.500 28 Q13 20 15.500 13 Q18 5 29 3.500 Q38 2 44 8 Q49 14 46 22 L43.500 28 Q43.500 23 41 20 Q33 22 26 17.500 Q20 20 17.500 28Z" fill="#101f5c"/></svg></div>
<div class="abs nm" style="left:275px;top:297.5px">财经-国峰</div>
<div class="abs av" style="left:350px;top:232px"><svg width="58" height="58" viewBox="0 0 58 58"><rect width="58" height="58" fill="#c9e8fb"/><path d="M25.0 36 h11 v9 q0.500 5 4 8 h-19 q3.500 -3 4 -8z" fill="#f0b8a2"/><path d="M25.0 40 h11 v4.500 q-5.500 3 -11 0z" fill="#f2bcaa"/><path d="M2 58.500 Q8 51.5 21.5 49 Q30.5 54 39.5 49 Q51 51.5 57 58.500 Z" fill="#35b2ec"/><ellipse cx="17.4" cy="27.5" rx="2.200" ry="3.400" fill="#f0b8a2"/><ellipse cx="43.6" cy="27.5" rx="2.200" ry="3.400" fill="#f0b8a2"/><path d="M18.0 21 Q18.0 13 30.5 13 Q43.0 13 43.0 21 L43.0 29 Q41.5 40.5 30.5 44.5 Q19.5 40.5 18.0 29 Z" fill="#f9cfbb"/><ellipse cx="25.2" cy="26" rx="1.900" ry="1.400" fill="#1a1a3a"/><ellipse cx="35.8" cy="26" rx="1.900" ry="1.400" fill="#1a1a3a"/><path d="M22.5 23 q2.700 -1.300 5.200 0 M33.3 23 q2.500 -1.300 5.200 0" stroke="#2a2a4a" stroke-width="0.900" fill="none"/><path d="M27.5 38.0 q3 2.600 6 0 q-3 -0.800 -6 0z" fill="#f2867e"/><path d="M17.500 29 Q13 18 18 10.500 Q24 3.500 32 4.500 Q43 5 46 14 Q47.500 21 43.500 29 Q43.500 23 41 22 Q30.500 24 20 22 Q18 23 17.500 29Z" fill="#101f5c"/></svg></div>
<div class="abs nm" style="left:345px;top:297.5px">直播-龙轩</div>
<div class="abs av" style="left:420px;top:232px"><svg width="58" height="58" viewBox="0 0 58 58"><rect width="58" height="58" fill="#c9e8fb"/><path d="M25.0 36 h11 v9 q0.500 5 4 8 h-19 q3.500 -3 4 -8z" fill="#f7cdbd"/><path d="M25.0 40 h11 v4.500 q-5.500 3 -11 0z" fill="#f2bcaa"/><path d="M2 58.500 Q8 51.5 21.5 49 Q30.5 54 39.5 49 Q51 51.5 57 58.500 Z" fill="#5fa6e0"/><ellipse cx="17.4" cy="27.5" rx="2.200" ry="3.400" fill="#f7cdbd"/><ellipse cx="43.6" cy="27.5" rx="2.200" ry="3.400" fill="#f7cdbd"/><path d="M18.0 21 Q18.0 13 30.5 13 Q43.0 13 43.0 21 L43.0 29 Q41.5 40.5 30.5 44.5 Q19.5 40.5 18.0 29 Z" fill="#fde2d6"/><ellipse cx="25.2" cy="26" rx="1.900" ry="1.400" fill="#1a1a3a"/><ellipse cx="35.8" cy="26" rx="1.900" ry="1.400" fill="#1a1a3a"/><path d="M22.5 23 q2.700 -1.300 5.200 0 M33.3 23 q2.500 -1.300 5.200 0" stroke="#2a2a4a" stroke-width="0.900" fill="none"/><path d="M27.5 38.0 q3 2.600 6 0 q-3 -0.800 -6 0z" fill="#f2867e"/><path d="M17.500 28 Q13.500 18 17.500 11 Q23 4 34 6 Q46 8 47 18 L43.500 28 Q44 22 42 19 Q35 16 28 19.500 Q21 22 17.500 28Z" fill="#101f5c"/></svg></div>
<div class="abs nm" style="left:415px;top:297.5px">情感-翰文</div>
<div class="abs av" style="left:490px;top:232px"><svg width="58" height="58" viewBox="0 0 58 58"><rect width="58" height="58" fill="#c9e8fb"/><path d="M30.500 5 Q44 5 46.500 19 Q51.500 31 50 39 Q48 47.5 40 47 L21 47 Q13 47.5 11 39 Q9.500 31 14.500 19 Q17 5 30.500 5Z" fill="#101f5c"/><path d="M25.0 36 h11 v9 q0.500 5 4 8 h-19 q3.500 -3 4 -8z" fill="#f7cdbd"/><path d="M25.0 40 h11 v4.500 q-5.500 3 -11 0z" fill="#f2bcaa"/><path d="M7 58.500 Q13 54.5 21.5 52 Q30.5 57 39.5 52 Q49 54.5 55 58.500 Z" fill="#fbfbfd"/><ellipse cx="17.599999999999998" cy="28.5" rx="2.200" ry="3.400" fill="#f7cdbd"/><ellipse cx="43.4" cy="28.5" rx="2.200" ry="3.400" fill="#f7cdbd"/><path d="M18.2 22 Q18.2 14 30.5 14 Q42.8 14 42.8 22 L42.8 30 Q41.3 39.5 30.5 43.5 Q19.7 39.5 18.2 30 Z" fill="#fde2d6"/><ellipse cx="25.2" cy="27" rx="1.900" ry="1.400" fill="#1a1a3a"/><ellipse cx="35.8" cy="27" rx="1.900" ry="1.400" fill="#1a1a3a"/><path d="M22.5 24 q2.700 -1.300 5.200 0 M33.3 24 q2.500 -1.300 5.200 0" stroke="#2a2a4a" stroke-width="0.900" fill="none"/><path d="M27.5 37.0 q3 2.600 6 0 q-3 -0.800 -6 0z" fill="#f2867e"/><path d="M18 30 Q15 15 30.500 12 Q46 15 43 30 Q42 23 35 22.500 L31 16.500 L28 24.500 Q20 23 18 30Z" fill="#101f5c"/></svg></div>
<div class="abs nm" style="left:485px;top:297.5px">情感-美雪</div>
<div class="abs av" style="left:560px;top:232px"><svg width="58" height="58" viewBox="0 0 58 58"><rect width="58" height="58" fill="#c9e8fb"/><path d="M25.0 36 h11 v9 q0.500 5 4 8 h-19 q3.500 -3 4 -8z" fill="#f0b8a2"/><path d="M25.0 40 h11 v4.500 q-5.500 3 -11 0z" fill="#f2bcaa"/><path d="M2 58.500 Q8 55.0 21.5 52.5 Q30.5 57.5 39.5 52.5 Q51 55.0 57 58.500 Z" fill="#fbfbfd"/><ellipse cx="17.4" cy="27.5" rx="2.200" ry="3.400" fill="#f0b8a2"/><ellipse cx="43.6" cy="27.5" rx="2.200" ry="3.400" fill="#f0b8a2"/><path d="M18.0 21 Q18.0 13 30.5 13 Q43.0 13 43.0 21 L43.0 29 Q41.5 40.5 30.5 44.5 Q19.5 40.5 18.0 29 Z" fill="#f9cfbb"/><ellipse cx="25.2" cy="26" rx="1.900" ry="1.400" fill="#1a1a3a"/><ellipse cx="35.8" cy="26" rx="1.900" ry="1.400" fill="#1a1a3a"/><path d="M22.5 23 q2.700 -1.300 5.200 0 M33.3 23 q2.500 -1.300 5.200 0" stroke="#2a2a4a" stroke-width="0.900" fill="none"/><path d="M27.5 38.0 q3 2.600 6 0 q-3 -0.800 -6 0z" fill="#f2867e"/><path d="M17.500 28 Q13 20 15.500 13 Q18 5 29 3.500 Q38 2 44 8 Q49 14 46 22 L43.500 28 Q43.500 23 41 20 Q33 22 26 17.500 Q20 20 17.500 28Z" fill="#101f5c"/></svg></div>
<div class="abs nm" style="left:555px;top:297.5px">直播-龙辉</div>
<div class="abs av" style="left:630px;top:232px"><svg width="58" height="58" viewBox="0 0 58 58"><rect width="58" height="58" fill="#c9e8fb"/><path d="M25.0 36 h11 v9 q0.500 5 4 8 h-19 q3.500 -3 4 -8z" fill="#f7cdbd"/><path d="M25.0 40 h11 v4.500 q-5.500 3 -11 0z" fill="#f2bcaa"/><path d="M2 58.500 Q8 51.5 21.5 49 Q30.5 54 39.5 49 Q51 51.5 57 58.500 Z" fill="#cfe29a"/><ellipse cx="17.4" cy="27.5" rx="2.200" ry="3.400" fill="#f7cdbd"/><ellipse cx="43.6" cy="27.5" rx="2.200" ry="3.400" fill="#f7cdbd"/><path d="M18.0 21 Q18.0 13 30.5 13 Q43.0 13 43.0 21 L43.0 29 Q41.5 40.5 30.5 44.5 Q19.5 40.5 18.0 29 Z" fill="#fde2d6"/><ellipse cx="25.2" cy="26" rx="1.900" ry="1.400" fill="#1a1a3a"/><ellipse cx="35.8" cy="26" rx="1.900" ry="1.400" fill="#1a1a3a"/><path d="M22.5 23 q2.700 -1.300 5.200 0 M33.3 23 q2.500 -1.300 5.200 0" stroke="#2a2a4a" stroke-width="0.900" fill="none"/><path d="M27.5 38.0 q3 2.600 6 0 q-3 -0.800 -6 0z" fill="#f2867e"/><path d="M17.500 28 Q13.500 18 17.500 11 Q23 4 34 6 Q46 8 47 18 L43.500 28 Q44 22 42 19 Q35 16 28 19.500 Q21 22 17.500 28Z" fill="#101f5c"/></svg></div>
<div class="abs nm" style="left:625px;top:297.5px">法律-翰墨</div>
<div class="abs av" style="left:700px;top:232px"><svg width="58" height="58" viewBox="0 0 58 58"><rect width="58" height="58" fill="#c9e8fb"/><path d="M30.500 5 Q44 5 46.500 19 Q51.500 31 50 39 Q48 47.5 40 47 L21 47 Q13 47.5 11 39 Q9.500 31 14.500 19 Q17 5 30.500 5Z" fill="#101f5c"/><path d="M25.0 36 h11 v9 q0.500 5 4 8 h-19 q3.500 -3 4 -8z" fill="#f7cdbd"/><path d="M25.0 40 h11 v4.500 q-5.500 3 -11 0z" fill="#f2bcaa"/><path d="M7 58.500 Q13 54.5 21.5 52 Q30.5 57 39.5 52 Q49 54.5 55 58.500 Z" fill="#35b2ec"/><ellipse cx="17.599999999999998" cy="28.5" rx="2.200" ry="3.400" fill="#f7cdbd"/><ellipse cx="43.4" cy="28.5" rx="2.200" ry="3.400" fill="#f7cdbd"/><path d="M18.2 22 Q18.2 14 30.5 14 Q42.8 14 42.8 22 L42.8 30 Q41.3 39.5 30.5 43.5 Q19.7 39.5 18.2 30 Z" fill="#fde2d6"/><ellipse cx="25.2" cy="27" rx="1.900" ry="1.400" fill="#1a1a3a"/><ellipse cx="35.8" cy="27" rx="1.900" ry="1.400" fill="#1a1a3a"/><path d="M22.5 24 q2.700 -1.300 5.200 0 M33.3 24 q2.500 -1.300 5.200 0" stroke="#2a2a4a" stroke-width="0.900" fill="none"/><path d="M27.5 37.0 q3 2.600 6 0 q-3 -0.800 -6 0z" fill="#f2867e"/><path d="M30.500 15.500 Q22 17 19 29 L17 29 Q15 18 20 10 Q30.500 5 41 10 Q46 18 44 29 L42 29 Q39 17 30.500 15.500Z" fill="#101f5c"/></svg></div>
<div class="abs nm" style="left:695px;top:297.5px">直播-婉妍</div>
<div class="abs av" style="left:770px;top:232px"><svg width="58" height="58" viewBox="0 0 58 58"><rect width="58" height="58" fill="#c9e8fb"/><path d="M30.500 5 Q44 5 46.500 19 Q51.500 31 50 39 Q48 47.5 40 47 L21 47 Q13 47.5 11 39 Q9.500 31 14.500 19 Q17 5 30.500 5Z" fill="#101f5c"/><path d="M25.0 36 h11 v9 q0.500 5 4 8 h-19 q3.500 -3 4 -8z" fill="#f7cdbd"/><path d="M25.0 40 h11 v4.500 q-5.500 3 -11 0z" fill="#f2bcaa"/><path d="M7 58.500 Q13 54.5 21.5 52 Q30.5 57 39.5 52 Q49 54.5 55 58.500 Z" fill="#fbfbfd"/><ellipse cx="17.599999999999998" cy="28.5" rx="2.200" ry="3.400" fill="#f7cdbd"/><ellipse cx="43.4" cy="28.5" rx="2.200" ry="3.400" fill="#f7cdbd"/><path d="M18.2 22 Q18.2 14 30.5 14 Q42.8 14 42.8 22 L42.8 30 Q41.3 39.5 30.5 43.5 Q19.7 39.5 18.2 30 Z" fill="#fde2d6"/><ellipse cx="25.2" cy="27" rx="1.900" ry="1.400" fill="#1a1a3a"/><ellipse cx="35.8" cy="27" rx="1.900" ry="1.400" fill="#1a1a3a"/><path d="M22.5 24 q2.700 -1.300 5.200 0 M33.3 24 q2.500 -1.300 5.200 0" stroke="#2a2a4a" stroke-width="0.900" fill="none"/><path d="M27.5 37.0 q3 2.600 6 0 q-3 -0.800 -6 0z" fill="#f2867e"/><path d="M18 30 Q15 15 30.500 12 Q46 15 43 30 Q42 23 35 22.500 L31 16.500 L28 24.500 Q20 23 18 30Z" fill="#101f5c"/></svg></div>
<div class="abs nm" style="left:765px;top:297.5px">法律-美琪</div>
<div class="abs av" style="left:840px;top:232px"><svg width="58" height="58" viewBox="0 0 58 58"><rect width="58" height="58" fill="#c9e8fb"/><ellipse cx="18.5" cy="43" rx="6.300" ry="5.600" fill="#101f5c"/><ellipse cx="47.0" cy="27" rx="4.500" ry="7" fill="#101f5c"/><path d="M30.500 5.500 Q45 5.500 46.500 20 Q47.500 30 44 37 L17 37 Q13.500 30 14.500 20 Q16 5.500 30.500 5.500Z" fill="#101f5c"/><path d="M25.0 36 h11 v9 q0.500 5 4 8 h-19 q3.500 -3 4 -8z" fill="#f7cdbd"/><path d="M25.0 40 h11 v4.500 q-5.500 3 -11 0z" fill="#f2bcaa"/><path d="M7 58.500 Q13 52.5 21.5 50 Q30.5 55 39.5 50 Q49 52.5 55 58.500 Z" fill="#35b2ec"/><ellipse cx="17.599999999999998" cy="28.5" rx="2.200" ry="3.400" fill="#f7cdbd"/><ellipse cx="43.4" cy="28.5" rx="2.200" ry="3.400" fill="#f7cdbd"/><path d="M18.2 22 Q18.2 14 30.5 14 Q42.8 14 42.8 22 L42.8 30 Q41.3 40 30.5 44 Q19.7 40 18.2 30 Z" fill="#fde2d6"/><ellipse cx="25.2" cy="27" rx="1.900" ry="1.400" fill="#1a1a3a"/><ellipse cx="35.8" cy="27" rx="1.900" ry="1.400" fill="#1a1a3a"/><path d="M22.5 24 q2.700 -1.300 5.200 0 M33.3 24 q2.500 -1.300 5.200 0" stroke="#2a2a4a" stroke-width="0.900" fill="none"/><path d="M27.5 37.5 q3 2.600 6 0 q-3 -0.800 -6 0z" fill="#f2867e"/><path d="M30.500 15 Q22 17 19 30 L17 30 Q14 18 20 10 Q30.500 5 41 10 Q47 18 44 30 L42 30 Q39 17 30.500 15Z" fill="#101f5c"/></svg></div>
<div class="abs nm" style="left:835px;top:297.5px">新闻-凤熙</div>
<div class="abs av" style="left:140px;top:332px"><svg width="58" height="58" viewBox="0 0 58 58"><rect width="58" height="58" fill="#c9e8fb"/><path d="M43.0 25 Q51.0 23 52.0 30 Q56.0 32 53.0 36 Q55.0 41 49.0 40.500 Q46.0 44 42.0 40 Z" fill="#101f5c"/><path d="M30.500 5 Q43 5 45 18 Q46.500 28 44 38 L40 43 L22 43 Q14 44 14 34 Q12.500 28 15.500 18 Q17 5 30.500 5Z" fill="#101f5c"/><path d="M25.0 36 h11 v9 q0.500 5 4 8 h-19 q3.500 -3 4 -8z" fill="#f7cdbd"/><path d="M25.0 40 h11 v4.500 q-5.500 3 -11 0z" fill="#f2bcaa"/><path d="M7 58.500 Q13 53.0 21.5 50.5 Q30.5 55.5 39.5 50.5 Q49 53.0 55 58.500 Z" fill="#fbfbfd"/><ellipse cx="17.599999999999998" cy="27.5" rx="2.200" ry="3.400" fill="#f7cdbd"/><ellipse cx="43.4" cy="27.5" rx="2.200" ry="3.400" fill="#f7cdbd"/><path d="M18.2 21 Q18.2 13 30.5 13 Q42.8 13 42.8 21 L42.8 29 Q41.3 37 30.5 41 Q19.7 37 18.2 29 Z" fill="#fde2d6"/><ellipse cx="25.2" cy="26" rx="1.900" ry="1.400" fill="#1a1a3a"/><ellipse cx="35.8" cy="26" rx="1.900" ry="1.400" fill="#1a1a3a"/><path d="M22.5 23 q2.700 -1.300 5.200 0 M33.3 23 q2.500 -1.300 5.200 0" stroke="#2a2a4a" stroke-width="0.900" fill="none"/><path d="M27.5 34.5 q3 2.600 6 0 q-3 -0.800 -6 0z" fill="#f2867e"/><path d="M18 29 Q14.500 14 30.500 11.500 Q46.500 14 43 29 Q41 19 31 15.500 Q23 19 18 29Z" fill="#101f5c"/></svg></div>
<div class="abs nm" style="left:135px;top:397.5px">直播-婉如</div>
<div class="abs av" style="left:210px;top:332px"><svg width="58" height="58" viewBox="0 0 58 58"><rect width="58" height="58" fill="#c9e8fb"/><path d="M25.0 36 h11 v9 q0.500 5 4 8 h-19 q3.500 -3 4 -8z" fill="#f0b8a2"/><path d="M25.0 40 h11 v4.500 q-5.500 3 -11 0z" fill="#f2bcaa"/><path d="M2 58.500 Q8 55.0 21.5 52.5 Q30.5 57.5 39.5 52.5 Q51 55.0 57 58.500 Z" fill="#35b2ec"/><ellipse cx="17.4" cy="27.5" rx="2.200" ry="3.400" fill="#f0b8a2"/><ellipse cx="43.6" cy="27.5" rx="2.200" ry="3.400" fill="#f0b8a2"/><path d="M18.0 21 Q18.0 13 30.5 13 Q43.0 13 43.0 21 L43.0 29 Q41.5 40.5 30.5 44.5 Q19.5 40.5 18.0 29 Z" fill="#f9cfbb"/><ellipse cx="25.2" cy="26" rx="1.900" ry="1.400" fill="#1a1a3a"/><ellipse cx="35.8" cy="26" rx="1.900" ry="1.400" fill="#1a1a3a"/><path d="M22.5 23 q2.700 -1.300 5.200 0 M33.3 23 q2.500 -1.300 5.200 0" stroke="#2a2a4a" stroke-width="0.900" fill="none"/><path d="M27.5 38.0 q3 2.600 6 0 q-3 -0.800 -6 0z" fill="#f2867e"/><path d="M17.500 28 Q13 20 15.500 13 Q18 5 29 3.500 Q38 2 44 8 Q49 14 46 22 L43.500 28 Q43.500 23 41 20 Q33 22 26 17.500 Q20 20 17.500 28Z" fill="#101f5c"/></svg></div>
<div class="abs nm" style="left:205px;top:397.5px">新闻-国瑞</div>
<div class="abs av" style="left:280px;top:332px"><svg width="58" height="58" viewBox="0 0 58 58"><rect width="58" height="58" fill="#c9e8fb"/><path d="M30.500 5 Q44 5 46.500 19 Q51.500 31 50 39 Q48 47.5 40 47 L21 47 Q13 47.5 11 39 Q9.500 31 14.500 19 Q17 5 30.500 5Z" fill="#101f5c"/><path d="M25.0 36 h11 v9 q0.500 5 4 8 h-19 q3.500 -3 4 -8z" fill="#f7cdbd"/><path d="M25.0 40 h11 v4.500 q-5.500 3 -11 0z" fill="#f2bcaa"/><path d="M7 58.500 Q13 54.5 21.5 52 Q30.5 57 39.5 52 Q49 54.5 55 58.500 Z" fill="#f186b4"/><ellipse cx="17.599999999999998" cy="28.5" rx="2.200" ry="3.400" fill="#f7cdbd"/><ellipse cx="43.4" cy="28.5" rx="2.200" ry="3.400" fill="#f7cdbd"/><path d="M18.2 22 Q18.2 14 30.5 14 Q42.8 14 42.8 22 L42.8 30 Q41.3 39.5 30.5 43.5 Q19.7 39.5 18.2 30 Z" fill="#fde2d6"/><ellipse cx="25.2" cy="27" rx="1.900" ry="1.400" fill="#1a1a3a"/><ellipse cx="35.8" cy="27" rx="1.900" ry="1.400" fill="#1a1a3a"/><path d="M22.5 24 q2.700 -1.300 5.200 0 M33.3 24 q2.500 -1.300 5.200 0" stroke="#2a2a4a" stroke-width="0.900" fill="none"/><path d="M27.5 37.0 q3 2.600 6 0 q-3 -0.800 -6 0z" fill="#f2867e"/><path d="M30.500 15.500 Q22 17 19 29 L17 29 Q15 18 20 10 Q30.500 5 41 10 Q46 18 44 29 L42 29 Q39 17 30.500 15.500Z" fill="#101f5c"/></svg></div>
<div class="abs nm" style="left:275px;top:397.5px">直播-慧雅</div>
<div class="abs av" style="left:350px;top:332px"><svg width="58" height="58" viewBox="0 0 58 58"><rect width="58" height="58" fill="#c9e8fb"/><path d="M30.500 5 Q44 5 46.500 19 Q51.500 31 50 38 Q48 46.5 40 46 L21 46 Q13 46.5 11 38 Q9.500 31 14.500 19 Q17 5 30.500 5Z" fill="#101f5c"/><path d="M25.0 36 h11 v9 q0.500 5 4 8 h-19 q3.500 -3 4 -8z" fill="#f7cdbd"/><path d="M25.0 40 h11 v4.500 q-5.500 3 -11 0z" fill="#f2bcaa"/><path d="M7 58.500 Q13 54.5 21.5 52 Q30.5 57 39.5 52 Q49 54.5 55 58.500 Z" fill="#fbfbfd"/><ellipse cx="17.599999999999998" cy="28.5" rx="2.200" ry="3.400" fill="#f7cdbd"/><ellipse cx="43.4" cy="28.5" rx="2.200" ry="3.400" fill="#f7cdbd"/><path d="M18.2 22 Q18.2 14 30.5 14 Q42.8 14 42.8 22 L42.8 30 Q41.3 39.5 30.5 43.5 Q19.7 39.5 18.2 30 Z" fill="#fde2d6"/><ellipse cx="25.2" cy="27" rx="1.900" ry="1.400" fill="#1a1a3a"/><ellipse cx="35.8" cy="27" rx="1.900" ry="1.400" fill="#1a1a3a"/><path d="M22.5 24 q2.700 -1.300 5.200 0 M33.3 24 q2.500 -1.300 5.200 0" stroke="#2a2a4a" stroke-width="0.900" fill="none"/><path d="M27.5 37.0 q3 2.600 6 0 q-3 -0.800 -6 0z" fill="#f2867e"/><path d="M18 30 Q15 15 30.500 12 Q46 15 43 30 Q42 23 35 22.500 L31 16.500 L28 24.500 Q20 23 18 30Z" fill="#101f5c"/></svg></div>
<div class="abs nm" style="left:345px;top:397.5px">直播-静婉</div>
<div class="abs av" style="left:420px;top:332px"><svg width="58" height="58" viewBox="0 0 58 58"><rect width="58" height="58" fill="#c9e8fb"/><path d="M25.0 36 h11 v9 q0.500 5 4 8 h-19 q3.500 -3 4 -8z" fill="#f7cdbd"/><path d="M25.0 40 h11 v4.500 q-5.500 3 -11 0z" fill="#f2bcaa"/><path d="M2 58.500 Q8 51.5 21.5 49 Q30.5 54 39.5 49 Q51 51.5 57 58.500 Z" fill="#fbfbfd"/><ellipse cx="17.4" cy="27.5" rx="2.200" ry="3.400" fill="#f7cdbd"/><ellipse cx="43.6" cy="27.5" rx="2.200" ry="3.400" fill="#f7cdbd"/><path d="M18.0 21 Q18.0 13 30.5 13 Q43.0 13 43.0 21 L43.0 29 Q41.5 40.5 30.5 44.5 Q19.5 40.5 18.0 29 Z" fill="#fde2d6"/><ellipse cx="25.2" cy="26" rx="1.900" ry="1.400" fill="#1a1a3a"/><ellipse cx="35.8" cy="26" rx="1.900" ry="1.400" fill="#1a1a3a"/><path d="M22.5 23 q2.700 -1.300 5.200 0 M33.3 23 q2.500 -1.300 5.200 0" stroke="#2a2a4a" stroke-width="0.900" fill="none"/><path d="M27.5 38.0 q3 2.600 6 0 q-3 -0.800 -6 0z" fill="#f2867e"/><path d="M17.500 28 Q13.500 18 17.500 11 Q23 4 34 6 Q46 8 47 18 L43.500 28 Q44 22 42 19 Q35 16 28 19.500 Q21 22 17.500 28Z" fill="#101f5c"/></svg></div>
<div class="abs nm" style="left:415px;top:397.5px">直播-帅铭</div>
<div class="abs av" style="left:490px;top:332px"><svg width="58" height="58" viewBox="0 0 58 58"><rect width="58" height="58" fill="#c9e8fb"/><path d="M30.500 5 Q44 5 46.500 19 Q51.500 31 50 41 Q48 49.5 40 49 L21 49 Q13 49.5 11 41 Q9.500 31 14.500 19 Q17 5 30.500 5Z" fill="#101f5c"/><path d="M25.0 36 h11 v9 q0.500 5 4 8 h-19 q3.500 -3 4 -8z" fill="#f7cdbd"/><path d="M25.0 40 h11 v4.500 q-5.500 3 -11 0z" fill="#f2bcaa"/><path d="M7 58.500 Q13 54.5 21.5 52 Q30.5 57 39.5 52 Q49 54.5 55 58.500 Z" fill="#fbfbfd"/><ellipse cx="17.599999999999998" cy="28.5" rx="2.200" ry="3.400" fill="#f7cdbd"/><ellipse cx="43.4" cy="28.5" rx="2.200" ry="3.400" fill="#f7cdbd"/><path d="M18.2 22 Q18.2 14 30.5 14 Q42.8 14 42.8 22 L42.8 30 Q41.3 39.5 30.5 43.5 Q19.7 39.5 18.2 30 Z" fill="#fde2d6"/><ellipse cx="25.2" cy="27" rx="1.900" ry="1.400" fill="#1a1a3a"/><ellipse cx="35.8" cy="27" rx="1.900" ry="1.400" fill="#1a1a3a"/><path d="M22.5 24 q2.700 -1.300 5.200 0 M33.3 24 q2.500 -1.300 5.200 0" stroke="#2a2a4a" stroke-width="0.900" fill="none"/><path d="M27.5 37.0 q3 2.600 6 0 q-3 -0.800 -6 0z" fill="#f2867e"/><path d="M30.500 15.500 Q22 17 19 29 L17 29 Q15 18 20 10 Q30.500 5 41 10 Q46 18 44 29 L42 29 Q39 17 30.500 15.500Z" fill="#101f5c"/></svg></div>
<div class="abs nm" style="left:485px;top:397.5px">直播-雅灵</div>
<div class="abs nm" style="left:555px;top:397.5px">晖哥</div>
<div class="abs nm" style="left:625px;top:397.5px">明娟</div>
<div class="abs nm" style="left:695px;top:397.5px">德华</div>
<div class="abs nm" style="left:765px;top:397.5px">邱老师</div>
<div class="abs" style="left:142px;top:132px;width:50px;height:16px;background:#5b6ff7;border-radius:2px 2px 5px 2px;font-size:12px;line-height:18.5px;text-align:center;color:#fff">常用</div>
<svg class="abs" style="left:104px;top:60px" width="813" height="408" viewBox="0 0 813 408"><rect x="3" y="3" width="806.200" height="401.200" rx="2" ry="2" fill="none" stroke="#fb2012" stroke-width="3.300"/></svg>
<div class="abs fbtn" style="left:498px;width:100px;border:2px solid #3b3e5c">取消</div>
<div class="abs fbtn" style="left:618px;width:140px;padding:2px;line-height:36px;background:linear-gradient(90deg,#5b6ff7,#12d6a3)"><div style="height:34px;background:#0d1021;border-radius:2px">添加至常用</div></div>
<div class="abs fbtn" style="left:778px;width:140px;padding:2px;line-height:36px;background:linear-gradient(90deg,#5b6ff7,#12d6a3)"><div style="height:34px;background:#0d1021;border-radius:2px">保存</div></div>
</div>
<!--MODAL-END-->
</div>
</body>
</html>
